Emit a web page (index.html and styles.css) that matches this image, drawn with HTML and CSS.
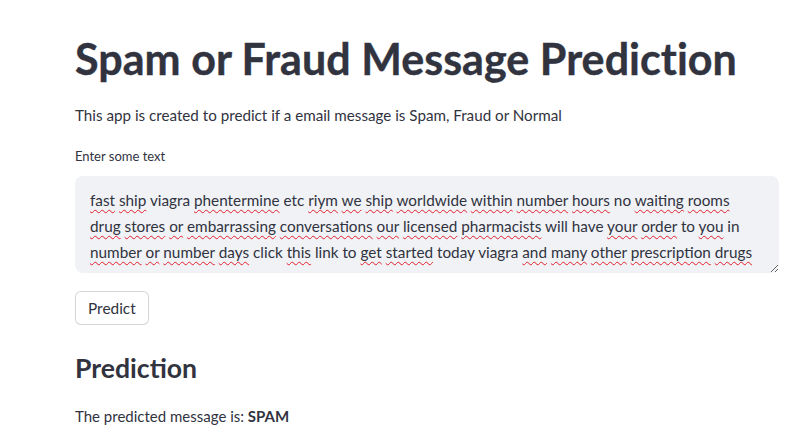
FILE: index.html
```html
<!DOCTYPE html>
<html lang="en">
<head>
<meta charset="utf-8">
<title>Spam or Fraud Message Prediction</title>
<link rel="stylesheet" href="styles.css">
</head>
<body>
<main class="block">
  <h1 class="title">Spam or Fraud Message Prediction</h1>
  <p class="intro">This app is created to predict if a email message is Spam, Fraud or Normal</p>
  <label class="label">Enter some text</label>
  <div class="textarea" contenteditable="true" spellcheck="false"><span class="sp">fast</span> <span class="sp">ship</span> viagra <span class="sp">phentermine</span> etc <span class="sp">riym</span> <span class="sp">we</span> <span class="sp">ship</span> <span class="sp">worldwide</span> <span class="sp">within</span> <span class="sp">number</span> <span class="sp">hours</span> no <span class="sp">waiting</span> <span class="sp">rooms</span> <span class="sp">drug</span> <span class="sp">stores</span> <span class="sp">or</span> <span class="sp">embarrassing</span> <span class="sp">conversations</span> <span class="sp">our</span> <span class="sp">licensed</span> <span class="sp">pharmacists</span> will have <span class="sp">your</span> <span class="sp">order</span> to <span class="sp">you</span> in <span class="sp">number</span> <span class="sp">or</span> <span class="sp">number</span> <span class="sp">days</span> click <span class="sp">this</span> link to <span class="sp">get</span> <span class="sp">started</span> today viagra <span class="sp">and</span> <span class="sp">many</span> <span class="sp">other</span> <span class="sp">prescription</span> <span class="sp">drugs</span> <span class="sp">available</span> <span class="sp">including</span> <span class="sp">xanax</span> <span class="sp">valium</span> <span class="sp">levitra</span> <span class="sp">weight</span> <span class="sp">loss</span> <span class="sp">medications</span> and to help you quit smoking</div>
  <button class="btn" type="button">Predict</button>
  <h3 class="subhead">Prediction</h3>
  <p class="result">The predicted message is: <strong>SPAM</strong></p>
</main>
</body>
</html>
```

FILE: styles.css
```css
html, body {
  margin: 0;
  padding: 0;
  background: #ffffff;
}
body {
  font-family: "Lato", "Noto Sans", sans-serif;
  color: #31333f;
}
.block {
  width: 704px;
  margin-left: 75px;
  padding-top: 29px;
  display: flex;
  flex-direction: column;
  align-items: flex-start;
}
.title {
  margin: 0;
  font-size: 43px;
  font-weight: 700;
  line-height: 60px;
  letter-spacing: 0.05px;
  -webkit-text-stroke: 0.4px #31333f;
}
.intro {
  margin: 14px 0 0 0;
  font-size: 15.2px;
  line-height: 24px;
}
.label {
  margin-top: 18px;
  font-size: 13px;
  line-height: 22px;
}
.textarea {
  box-sizing: border-box;
  margin-top: 9px;
  width: 704px;
  height: 97px;
  padding: 11px 19px 11px 15px;
  background: #f0f2f6;
  border-radius: 8px;
  font-size: 15.3px;
  line-height: 26px;
  overflow: hidden;
  resize: vertical;
  outline: none;
}
.sp {
  text-decoration: underline wavy #e0202c;
  text-decoration-thickness: 1px;
  text-underline-offset: 3px;
  text-decoration-skip-ink: none;
}
.btn {
  margin-top: 18px;
  box-sizing: border-box;
  height: 34px;
  padding: 0 12px;
  background: #ffffff;
  border: 1px solid rgba(49, 51, 63, 0.2);
  border-radius: 6px;
  font-family: inherit;
  font-size: 15.4px;
  color: #31333f;
}
.subhead {
  margin: 25px 0 0 0;
  font-size: 26.6px;
  font-weight: 700;
  line-height: 36px;
}
.result {
  margin: 18px 0 0 0;
  font-size: 15px;
  line-height: 24px;
}
.result strong {
  font-weight: 700;
}
```
